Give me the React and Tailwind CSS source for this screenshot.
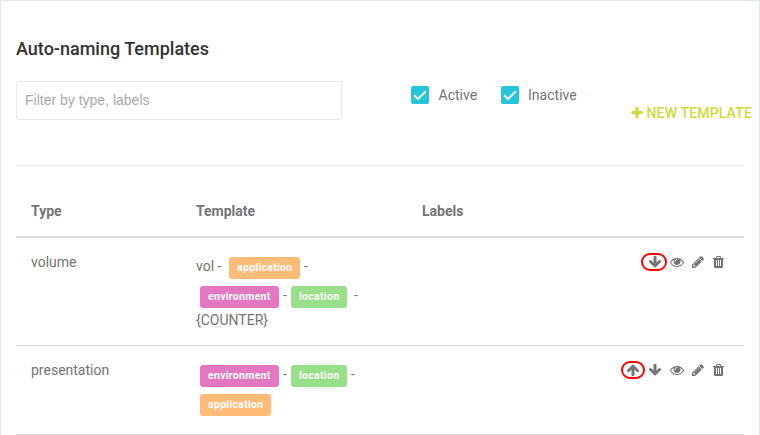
const PATHS = {
  plus: 'M1600 736v192q0 40-28 68t-68 28h-416v416q0 40-28 68t-68 28h-192q-40 0-68-28t-28-68v-416h-416q-40 0-68-28t-28-68v-192q0-40 28-68t68-28h416v-416q0-40 28-68t68-28h192q40 0 68 28t28 68v416h416q40 0 68 28t28 68z',
  down: 'M1675 832q0 53-37 90l-651 652q-39 37-91 37-53 0-90-37l-651-652q-38-36-38-90 0-53 38-91l74-75q39-37 91-37 53 0 90 37l294 294v-704q0-52 38-90t90-38h128q52 0 90 38t38 90v704l294-294q37-37 90-37 52 0 91 37l75 75q37 39 37 91z',
  up: 'M1675 971q0 51-37 90l-75 75q-38 38-91 38-54 0-90-38l-294-293v704q0 52-37.5 84.5t-90.5 32.5h-128q-53 0-90.5-32.5t-37.5-84.5v-704l-294 293q-36 38-90 38t-90-38l-75-75q-38-38-38-90 0-53 38-91l651-651q35-37 90-37 54 0 91 37l651 651q37 39 37 91z',
  eye: 'M1664 960q-152-236-381-353 61 104 61 225 0 185-131.5 316.5t-316.5 131.5-316.5-131.5-131.5-316.5q0-121 61-225-229 117-381 353 133 205 333.5 326.5t434.5 121.5 434.5-121.5 333.5-326.5zm-720-384q0-20-14-34t-34-14q-125 0-214.5 89.5t-89.5 214.5q0 20 14 34t34 14 34-14 14-34q0-86 61-147t147-61q20 0 34-14t14-34zm848 384q0 34-20 69-140 230-376.5 368.5t-499.5 138.5-499.5-139-376.5-368q-20-35-20-69t20-69q140-229 376.5-368t499.5-139 499.5 139 376.5 368q20 35 20 69z',
  pencil: 'M491 1536l91-91-235-235-91 91v107h128v128h107zm523-928q0-22-22-22-10 0-17 7l-542 542q-7 7-7 17 0 22 22 22 10 0 17-7l542-542q7-7 7-17zm-54-192l416 416-832 832h-416v-416zm683 96q0 53-37 90l-166 166-416-416 166-165q36-38 90-38 53 0 91 38l235 234q37 39 37 91z',
};

function Icon({ name, className = '' }) {
  return (
    <svg viewBox="0 0 1792 1792" className={`size-3.5 shrink-0 overflow-visible ${className}`} fill="currentColor">
      <path d={PATHS[name]} />
    </svg>
  );
}

function TrashIcon({ className = '' }) {
  return (
    <svg viewBox="0 0 14 14" className={`size-3.5 shrink-0 ${className}`} fill="currentColor" fillRule="evenodd">
      <path d="M5 .9h3q.5 0 .7.5L9.300 3H11.800q.2 0 .2.2v.6q0 .2-.2.2H11v7.700q0 1.300-1 1.300H3q-1 0-1-1.300V4h-.8q-.2 0-.2-.2v-.6q0-.2.2-.2H3.700l.6-1.600q.2-.5.700-.5zM5.100 2l-.4 1h3.600l-.4-1zM4 5v6h1V5zM6 5v6h1V5zM8 5v6h1V5z" />
    </svg>
  );
}

function Checkbox({ label }) {
  return (
    <label className="flex items-center gap-[9.5px]">
      <span className="flex size-[18px] items-center justify-center rounded-xs bg-[#26c6da]">
        <svg viewBox="0 0 18 18" className="size-[18px]" fill="none" stroke="#f0f0f0" strokeWidth="2">
          <path d="M3.2 9.2 7 13 14.8 5.2" />
        </svg>
      </span>
      {label}
    </label>
  );
}

const TAG_COLORS = {
  application: 'bg-[#ffbb78] w-[71px]',
  environment: 'bg-[#e377c2] w-[79px]',
  location: 'bg-[#98df8a] w-[56px]',
};

function Tag({ name }) {
  return (
    <span className={`mt-px h-[22px] rounded-[3px] pl-2 text-[10.5px] leading-[22px] font-bold tracking-[0.3px] text-white ${TAG_COLORS[name]}`}>
      {name}
    </span>
  );
}

function Highlight({ name, className }) {
  return (
    <span className={`flex h-[18px] items-center justify-center rounded-full border-2 border-[#ff0000] ${className}`}>
      <Icon name={name} />
    </span>
  );
}

function RowActions({ children }) {
  return (
    <div className="ml-auto flex h-[18px] items-center pr-[18px]">
      {children}
      <Icon name="eye" />
      <Icon name="pencil" className="ml-[7px]" />
      <TrashIcon className="ml-[7px]" />
    </div>
  );
}

export default function App() {
  return (
    <div className="h-[435px] w-[760px] overflow-hidden border-x border-t border-[#e0ebe7] bg-white px-[15px] font-[Roboto,sans-serif] text-sm text-[#757575]">
      <h1 className="mt-9 h-6 text-lg leading-6 font-medium text-[#333]">Auto-naming Templates</h1>

      <div className="mt-5 flex h-[84px] items-start">
        <input
          placeholder="Filter by type, labels"
          className="h-[39px] w-[326px] rounded-xs border border-[#e7e9e9] px-2 pb-0.5 font-['Liberation_Sans',sans-serif] text-sm placeholder:text-[#aaa]"
        />
        <div className="mt-[5px] ml-[69px] flex h-[18px] gap-[23.5px]">
          <Checkbox label="Active" />
          <Checkbox label="Inactive" />
        </div>
        <button className="mt-[22px] -mr-2 ml-auto flex h-5 items-center gap-0.5 font-medium tracking-[0.17px] whitespace-nowrap text-[#cddc39]">
          <Icon name="plus" />
          NEW TEMPLATE
        </button>
      </div>

      <div className="border-t border-[#e9eae9]">
        <div className="grid h-[72px] grid-cols-[165px_226px_1fr] border-b-2 border-[#dcdcdc] px-[15px] pt-[35px] leading-5 font-bold">
          <span>Type</span>
          <span>Template</span>
          <span>Labels</span>
        </div>

        <div className="flex h-[108px] border-b border-[#dcdcdc] pt-3.5 pl-[15px]">
          <div className="w-[165px] leading-5">volume</div>
          <div className="pt-1">
            <div className="flex h-[29px] leading-5">
              <span className="w-[33px]">vol -</span>
              <Tag name="application" />
              <span className="ml-1">-</span>
            </div>
            <div className="flex h-[25px] pl-1 leading-5">
              <Tag name="environment" />
              <span className="w-3 text-center">-</span>
              <Tag name="location" />
              <span className="ml-[7px]">-</span>
            </div>
            <div className="leading-5">{'{COUNTER}'}</div>
          </div>
          <div className="mt-px ml-auto">
            <RowActions>
              <Highlight name="down" className="mr-[3px] w-[26px] pl-0.5" />
            </RowActions>
          </div>
        </div>

        <div className="flex h-[89px] border-b border-[#dcdcdc] pt-3.5 pl-[15px]">
          <div className="w-[165px] leading-5">presentation</div>
          <div className="pt-1 pl-1">
            <div className="flex h-[29px] leading-5">
              <Tag name="environment" />
              <span className="w-3 text-center">-</span>
              <Tag name="location" />
              <span className="ml-1">-</span>
            </div>
            <div className="flex">
              <Tag name="application" />
            </div>
          </div>
          <div className="mt-px ml-auto">
            <RowActions>
              <Highlight name="up" className="mr-[3px] w-6" />
              <Icon name="down" className="mr-2" />
            </RowActions>
          </div>
        </div>
      </div>
    </div>
  );
}
